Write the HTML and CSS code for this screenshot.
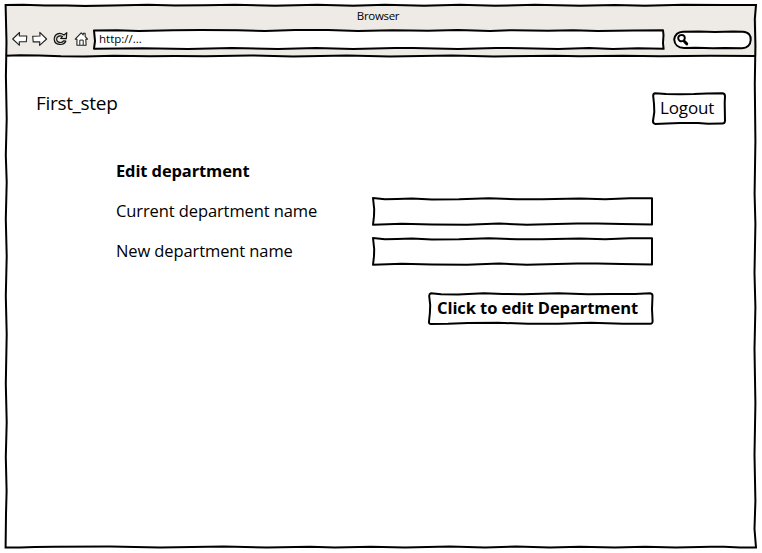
FILE: index.html
```html
<!DOCTYPE html>
<html lang="en">
<head>
<meta charset="utf-8">
<title>Browser</title>
<link rel="stylesheet" href="styles.css">
</head>
<body>
<div class="window">
  <header class="chrome">
    <div class="title">Browser</div>
    <div class="toolbar">
      <svg class="nav" viewBox="0 0 79 16" aria-hidden="true">
        <path class="solid" d="M.7 8 7.5 1.5 7.3 4.9 14.8 5 14.3 10.8 7.2 10.7 7.5 14.3Z"/>
        <path class="solid" d="M34.6 8 27.8 1.3 28 5 20.7 5.2 21.2 10.9 27.8 10.7 27.6 14.4Z"/>
        <path class="reload" d="M51.9 4 54.8 1.7 54.3 7.6 48.7 7.4 50.4 5.6C47.2 3.9 44.6 5.8 44.6 8.3 44.8 11.8 49.6 12.5 51.6 9.8L53.9 10C51.8 15 42.6 14.7 42.2 8.4 42.3 2.8 47.6.7 51.9 4Z"/>
        <path class="solid" d="M63.2 8.1 69.2 1.8 71.2 3.8 71.3 2.2 73.1 2.3 73.2 5.6 75.6 8.2 73.8 8.3 74.1 14.3 64.9 14.1 65 8.3Z"/>
        <path class="thin" d="M67.8 14V9.1h3.4v5"/>
      </svg>
      <div class="address">
        <svg class="sketch" viewBox="0 0 572 21"><path class="fill" d="M1 1.4 24 1.2 46 2 80 1.3 108 1 145 1.2 172 2 202 1.1 235 1 265 2 300 1.2 335 1.8 365 1 397 2 420 1.2 455 1.7 480 1.2 505 2 540 1.5 570 1.2 570.5 6 570 14 570.6 19.8 545 19.2 520 20 496 19.1 465 20 430 19.2 403 19 365 20 320 19 302 19 260 20 223 19 185 20 139 19 95 20 50 19.2 1 19.7 2 12Z"/></svg>
        <span>http://...</span>
      </div>
      <div class="search">
        <svg class="sketch" viewBox="0 0 79 20"><path class="fill" d="M10 1.8 26 1.4 42 2.1 60 1.6 70 1.7C76 2 78 6 77.7 10 77.5 15 74 18 69 18.2L52 17.9 40 18.3 23 17.8 11 18C5 18 1.5 14.5 1.2 9.5 2 4.5 5 2 10 1.8Z"/><path class="lens" d="M5.2 8C5.3 5.2 7.8 4.6 10.1 5.2 12.5 6.5 12.2 9.6 10.2 10.9 7.5 11.8 5.3 10.8 5.2 8Z"/><path class="handle" d="m11.5 11.5 2.2 2.3"/></svg>
      </div>
    </div>
  </header>
  <main>
    <div class="top">
      <h1>First_step</h1>
      <button class="logout"><svg class="sketch" viewBox="0 0 74 33"><path class="fill" d="M3 1.3 14 2 28 2.2 42 2 55 1.5 70 1.3Q73 1.5 73 4L72.7 11 73 29Q72.8 31.7 70 31.6L56 31.8 46 31 28 30.9 15 31.5 3 31.9Q.9 31.3 1 29L2.3 20 2 12 1.2 4Q1 1.8 3 1.3Z"/></svg><span>Logout</span></button>
    </div>
    <form>
      <h2>Edit department</h2>
      <label class="row"><span class="current">Current department name</span>
        <span class="field"><svg class="sketch" viewBox="0 0 282 29"><path class="fill" d="M1 1 13 2.2 25 2 40 1.6 60 2.5 87 2.3 117 1.2 145 2.2 170 2.3 208 1.4 233 2.2 258 1.3 280 1.2V27.6L250 27 225 26.6 205 26.4 185 27 155 27.7 127 26.5 95 27.8 60 27.6 30 26.8 1 27.8 2 19 2.2 12Z"/></svg></span>
      </label>
      <label class="row"><span class="new">New department name</span>
        <span class="field"><svg class="sketch" viewBox="0 0 282 29"><path class="fill" d="M1 1 13 2.2 25 2 40 1.6 60 2.5 87 2.3 117 1.2 145 2.2 170 2.3 208 1.4 233 2.2 258 1.3 280 1.2V27.6L250 27 225 26.6 205 26.4 185 27 155 27.7 127 26.5 95 27.8 60 27.6 30 26.8 1 27.8 2 19 2.2 12Z"/></svg></span>
      </label>
      <button class="submit" type="button"><svg class="sketch" viewBox="0 0 226 33"><path class="fill" d="M3 1.3 13 2.3 30 2.4 56 1.3 75 2 95 2.3 130 1.3 160 2.2 182 2 207 2 222 1.3Q224.7 1.7 224.5 4L224 17 224.6 29Q224.6 31.9 222 31.8L195 31.7 163 30.8 130 31.8 100 31.8 70 30.7 40 31 20 31.8 3 31.9Q.8 31.9 1 29.5L1.9 21 2.2 13 1.2 4Q1.2 1.8 3 1.3Z"/></svg><span>Click to edit Department</span></button>
    </form>
  </main>
  <svg class="sketch frame" viewBox="0 0 752 544" aria-hidden="true">
    <path class="line" d="M.6 1 18 .8 40 1.5 61 1.4 80 1.9 108 1.6 143 .8 170 1.5 200 1.3 230 .7 270 1.8 312 .8 348 1.8 380 .8 419 1.7 455 .8 490 1.8 530 .8 575 1.7 610 .9 640 1.8 678 .8 720 1 751 1 749.8 15 750.4 42 749.8 80 750.4 137 749.6 190 750.4 220 749.5 269 750.4 303 749.5 345 750.4 399 749.5 451 750.4 497 749.5 525 751 543.6 735 543.4 719 542.7 706 542.7 671 543.4 640 542.7 610 543.4 575 542.7 545 543.4 511 542.6 480 543.4 445 542.6 400 543.4 366 542.7 330 543.4 305 542.7 262 543.4 219 542.6 155 543.4 105 542.6 50 542.7 30 543 15 543.6 .6 543.6 1 510 1.6 487 .8 453 1.7 418 .8 380 1.7 330 .8 292 1.7 252 .8 215 1.7 178 .8 151 1.7 115 .9 72 1.5 38Z"/>
    <path class="line" d="M.8 51.8 15 51.3 34 51.4 56 52.3 80 52.4 109 51.7 145 52.3 170 52 200 52.3 245 51.4 288 52.4 342 51.4 385 52.4 447 51.4 489 52.4 550 51.7 575 52.3 618 51.7 655 52.3 705 51.8 751 52"/>
  </svg>
</div>
</body>
</html>
```
FILE: styles.css
```css
* { box-sizing: border-box; }
body { margin: 0; padding: 4px 6px 5px 5px; background: #fff; color: #000; font-family: "Open Sans", "Noto Sans", sans-serif; }
.window { position: relative; width: 752px; height: 544px; }
.chrome { height: 52px; padding-top: 4px; background: #eeebe6; }
.title { height: 20px; padding-right: 6px; text-align: center; font-size: 11.5px; line-height: 16px; letter-spacing: -.3px; }
.toolbar { display: flex; padding-left: 7px; }
.nav { width: 79px; height: 16px; margin-top: 3px; }
.address { position: relative; width: 572px; height: 21px; margin: 1px 0 0 2px; padding-left: 6px; font-size: 11.5px; line-height: 19px; }
.search { position: relative; width: 79px; height: 20px; margin: 2px 0 0 8px; }
.address span, button span { position: relative; }
.sketch { position: absolute; inset: 0; width: 100%; height: 100%; overflow: visible; pointer-events: none; }
.fill { fill: #fff; stroke: #000; stroke-width: 2; stroke-linejoin: round; }
.line { fill: none; stroke: #000; stroke-width: 2; }
.solid { fill: #fff; stroke: #222; stroke-width: 1.1; stroke-linejoin: round; }
.reload { fill: #d5d3cf; stroke: #111; stroke-width: 1.15; stroke-linejoin: round; }
.thin { fill: none; stroke: #222; stroke-width: 1; }
.lens { fill: #fff; stroke: #000; stroke-width: 2; }
.handle { stroke: #000; stroke-width: 3; stroke-linecap: round; }
main { padding: 36px 31px 0 31px; }
.top { display: flex; justify-content: space-between; height: 65px; }
h1 { margin: 0; font-size: 19px; line-height: 22px; font-weight: 400; letter-spacing: -.32px; }
button { position: relative; display: block; border: 0; padding: 0; background: none; color: #000; font-family: inherit; text-align: left; }
.logout { width: 74px; height: 33px; padding: 0 0 2px 8px; font-size: 17px; line-height: 30px; letter-spacing: -.15px; }
form { width: 538px; margin-left: 80px; }
h2 { margin: 0; height: 40px; font-size: 16.5px; line-height: 28px; font-weight: 700; letter-spacing: -.12px; white-space: nowrap; }
.row { display: flex; justify-content: space-between; height: 40px; font-size: 16.5px; line-height: 28px; letter-spacing: -.1px; white-space: nowrap; }
.field { position: relative; width: 282px; height: 29px; }
.submit { width: 226px; height: 33px; margin: 15px 0 0 auto; padding: 0 0 2px 9px; font-size: 16.5px; line-height: 30px; letter-spacing: -.08px; font-weight: 700; white-space: nowrap; }
```
